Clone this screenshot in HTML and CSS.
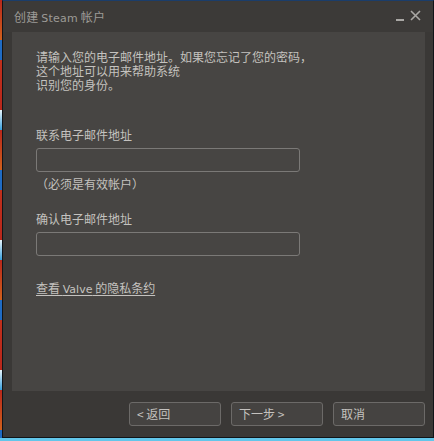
FILE: index.html
```html
<!DOCTYPE html>
<html lang="zh-CN">
<head>
<meta charset="utf-8">
<title>创建 Steam 帐户</title>
<link rel="stylesheet" href="styles.css">
</head>
<body>
<div class="desktop">
  <div class="window">
    <div class="titlebar">
      <span class="title">创建 <span class="latin">Steam</span> 帐户</span>
      <div class="controls">
        <span class="min"></span>
        <svg class="close" width="11" height="11" viewBox="0 0 11 11"><path d="M1 1 L10 10 M10 1 L1 10" stroke="#a9a7a4" stroke-width="1.6"/></svg>
      </div>
    </div>
    <div class="panel">
      <p class="intro">请输入您的电子邮件地址。如果您忘记了您的密码，<br>这个地址可以用来帮助系统<br>识别您的身份。</p>
      <div class="field">
        <label class="label">联系电子邮件地址</label>
        <div class="input"></div>
        <div class="hint">（必须是有效帐户）</div>
      </div>
      <div class="field second">
        <label class="label">确认电子邮件地址</label>
        <div class="input"></div>
      </div>
      <a class="link" href="#">查看 <span class="latin">Valve</span> 的隐私条约</a>
    </div>
    <div class="footer">
      <button class="btn">&lt; 返回</button>
      <button class="btn">下一步 &gt;</button>
      <button class="btn">取消</button>
    </div>
  </div>
</div>
</body>
</html>
```
FILE: styles.css
```css
html, body {
  margin: 0;
  padding: 0;
}
body {
  width: 434px;
  height: 441px;
  overflow: hidden;
  background: #1f6bc4;
  font-family: "Noto Sans CJK SC", "Noto Sans", sans-serif;
}
.desktop {
  height: 441px;
  background:
    linear-gradient(to bottom, transparent 438px, #62c6ea 438px),
    repeating-linear-gradient(to bottom, #b8281c 0, #d0601c 40px, #1f6bc4 40px, #1f6bc4 60px, #c0301c 60px, #b8281c 110px, #e8f4fa 110px, #3aa0dc 130px);
  padding-left: 2px;
  box-sizing: border-box;
}
.window {
  width: 432px;
  height: 438px;
  box-sizing: border-box;
  border: 1px solid #101418;
  border-top-color: #1b3d6a;
  background: #3a3836;
  display: flex;
  flex-direction: column;
}
.titlebar {
  height: 31px;
  flex: none;
  display: flex;
  align-items: center;
  justify-content: space-between;
  padding: 0 12px 0 11px;
  background: #3c3a38;
}
.title {
  color: #9c9a97;
  font-size: 12px;
  letter-spacing: 0.2px;
  margin-top: -1px;
}
.latin {
  font-family: "DejaVu Sans", "Liberation Sans", sans-serif;
  font-size: 11px;
}
.controls {
  display: flex;
  align-items: center;
  gap: 6px;
  margin-top: -2px;
}
.min {
  width: 8px;
  height: 2px;
  background: #a9a7a4;
  margin-top: 9px;
}
.panel {
  flex: none;
  height: 359px;
  margin: 0 8px 0 9px;
  background: #474543;
  padding: 18px 24px 0 24px;
  box-sizing: border-box;
}
.intro {
  margin: 0;
  color: #c4c2bf;
  font-size: 12px;
  line-height: 14px;
}
.field {
  margin-top: 35px;
}
.field.second {
  margin-top: 19px;
}
.label {
  display: block;
  color: #c4c2bf;
  font-size: 12px;
  line-height: 16px;
}
.input {
  width: 264px;
  height: 24px;
  box-sizing: border-box;
  margin-top: 5px;
  border: 1px solid #7b7977;
  border-radius: 3px;
  background: #474543;
}
.hint {
  color: #c4c2bf;
  font-size: 12px;
  line-height: 16px;
  margin-top: 4px;
}
.link {
  display: inline-block;
  margin-top: 24px;
  color: #c4c2bf;
  font-size: 12px;
  line-height: 16px;
  text-decoration: underline;
  text-underline-offset: 2px;
}
.footer {
  flex: 1;
  display: flex;
  justify-content: flex-end;
  align-items: flex-start;
  gap: 10px;
  padding: 11px 8px 0 0;
}
.btn {
  width: 92px;
  height: 24px;
  box-sizing: border-box;
  border: 1px solid #6c6a68;
  border-radius: 3px;
  background: #454341;
  color: #c4c2bf;
  font-family: "Noto Sans CJK SC", "Noto Sans", sans-serif;
  font-size: 12px;
  text-align: left;
  padding: 0 0 0 7px;
  line-height: 20px;
}
```
